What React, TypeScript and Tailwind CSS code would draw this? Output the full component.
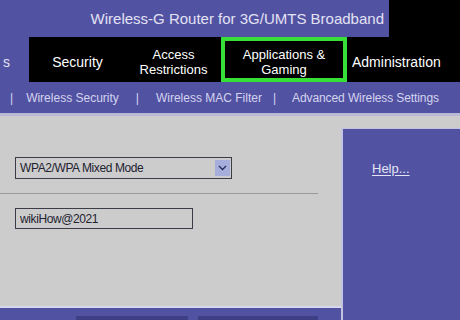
import React from "react";

const purple = "bg-[#5252a3]";

const App: React.FC = () => {
  return (
    <div className="w-[460px] h-[320px] overflow-hidden bg-[#cccccc] font-['Liberation_Sans',Arial,sans-serif]">
      {/* title bar */}
      <div className="flex h-[37px]">
        <div className={`w-[389px] ${purple} flex items-center justify-end pr-[5px] pt-[1px]`}>
          <span className="text-[15px] text-[#e2e2f2] whitespace-nowrap">
            Wireless-G Router for 3G/UMTS Broadband
          </span>
        </div>
        <div className="flex-1 bg-black" />
      </div>

      {/* main tabs */}
      <div className="flex h-[45px] bg-black text-white">
        <div className={`w-[29px] ${purple} flex items-center pl-[3px] pt-[5px] text-[14px] text-[#e2e2f2]`}>s</div>
        <div className="w-[97px] flex items-center justify-center pt-[5px] text-[14px]">Security</div>
        <div className="w-[95px] flex items-center justify-center pt-[5px] text-center text-[13px] leading-[15px]">
          Access
          <br />
          Restrictions
        </div>
        <div className="w-[126px] border-4 border-[#36e036] flex items-center justify-center pt-[5px] text-center text-[13px] leading-[15px]">
          Applications &amp;
          <br />
          Gaming
        </div>
        <div className="flex-1 flex items-center pl-[5px] pt-[5px] text-[14px]">Administration</div>
      </div>

      {/* sub tabs */}
      <div className={`h-[31px] ${purple} flex items-center text-[12px] text-[#d4d4ee] whitespace-nowrap`}>
        <span className="ml-[10px]">|</span>
        <span className="ml-[13px]">Wireless Security</span>
        <span className="ml-[17px]">|</span>
        <span className="ml-[17px]">Wireless MAC Filter</span>
        <span className="ml-[11px]">|</span>
        <span className="ml-[16px] tracking-[-0.1px]">Advanced Wireless Settings</span>
      </div>
      <div className="h-[3px] bg-[#b9b9d6]" />

      {/* body */}
      <div className="flex h-[204px]">
        <div className="w-[341px] flex flex-col">
          <div className="flex-1 pt-[41px]">
            <div className="ml-[15px] w-[217px] h-[22px] border border-[#3c3c48] flex items-center justify-between pl-[4px] pr-[1px]">
              <span className="text-[12px] tracking-[-0.4px] text-[#222230]">WPA2/WPA Mixed Mode</span>
              <div className="w-[15px] h-[16px] bg-[#a6aedb] flex items-center justify-center">
                <svg width="9" height="6" viewBox="0 0 9 6" fill="none">
                  <path d="M1 1l3.5 3.5L8 1" stroke="#2a2a5a" strokeWidth="1.3" />
                </svg>
              </div>
            </div>
            <div className="mt-[14px] w-[318px] h-[1px] bg-[#9a9a9a]" />
            <div className="mt-[14px] ml-[15px] w-[178px] h-[21px] border border-[#3c3c48] flex items-center pl-[4px]">
              <span className="text-[12px] tracking-[-0.4px] text-[#222230]">wikiHow@2021</span>
            </div>
          </div>
          <div className="h-[2px] bg-[#d6d6ee]" />
          <div className={`h-[12px] ${purple} flex gap-[10px] pl-[76px] pt-[8px]`}>
            <div className="w-[112px] h-[22px] shrink-0 bg-[#3f3f86] text-[12px] text-[#c9c9e6] text-center pt-[3px]">
              Save Settings
            </div>
            <div className="w-[120px] h-[22px] shrink-0 bg-[#3f3f86] text-[12px] text-[#c9c9e6] text-center pt-[3px]">
              Cancel Changes
            </div>
          </div>
        </div>
        <div className="flex-1 flex flex-col">
          <div className="h-[12px]" />
          <div className={`flex-1 ${purple} border-l-2 border-t border-[#c2c2e0] pl-[29px] pt-[27px]`}>
            <a className="text-[13px] text-[#e4e4f4] underline underline-offset-2">Help...</a>
          </div>
        </div>
      </div>
    </div>
  );
};

export default App;
